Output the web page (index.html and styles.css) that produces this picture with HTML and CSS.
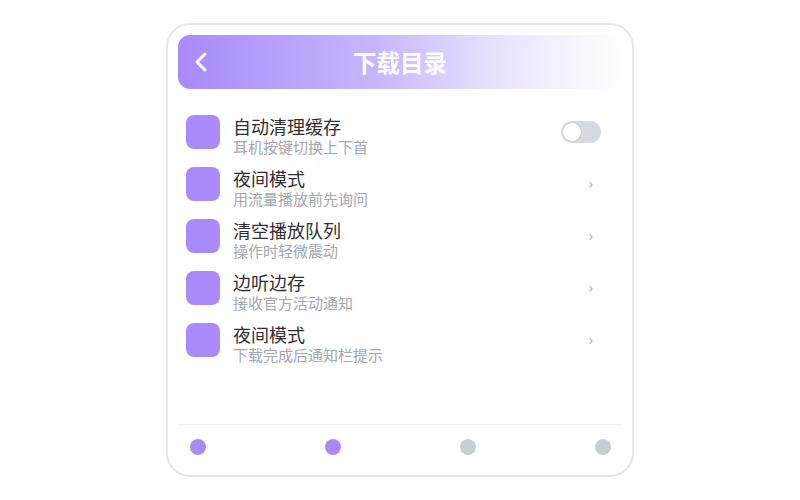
FILE: index.html
```html
<!DOCTYPE html>
<html>
<head>
    <title>下载目录</title>
    <meta charset="utf-8">
    <link rel="stylesheet" href="styles.css">
</head>
<body>
    <div class="phone">
        <!-- top bar -->
        <header class="topbar">
            <svg class="back" width="14" height="22" viewBox="0 0 14 22">
                <polyline points="11,3 3,11 11,19" fill="none" stroke="#ffffff" stroke-width="3" stroke-linecap="round" stroke-linejoin="round"/>
            </svg>
            <h1 class="title">下载目录</h1>
        </header>

        <!-- settings list -->
        <ul class="list">
            <li class="row">
                <span class="icon"></span>
                <div class="text">
                    <p class="name">自动清理缓存</p>
                    <p class="desc">耳机按键切换上下首</p>
                </div>
                <div class="side"><span class="toggle"><span class="knob"></span></span></div>
            </li>
            <li class="row">
                <span class="icon"></span>
                <div class="text">
                    <p class="name">夜间模式</p>
                    <p class="desc">用流量播放前先询问</p>
                </div>
                <div class="side"><span class="arrow">›</span></div>
            </li>
            <li class="row">
                <span class="icon"></span>
                <div class="text">
                    <p class="name">清空播放队列</p>
                    <p class="desc">操作时轻微震动</p>
                </div>
                <div class="side"><span class="arrow">›</span></div>
            </li>
            <li class="row">
                <span class="icon"></span>
                <div class="text">
                    <p class="name">边听边存</p>
                    <p class="desc">接收官方活动通知</p>
                </div>
                <div class="side"><span class="arrow">›</span></div>
            </li>
            <li class="row">
                <span class="icon"></span>
                <div class="text">
                    <p class="name">夜间模式</p>
                    <p class="desc">下载完成后通知栏提示</p>
                </div>
                <div class="side"><span class="arrow">›</span></div>
            </li>
        </ul>

        <!-- page dots -->
        <footer class="dots">
            <span class="dot on"></span>
            <span class="dot on"></span>
            <span class="dot"></span>
            <span class="dot"></span>
        </footer>
    </div>
</body>
</html>
```

FILE: styles.css
```css
body {
    margin: 0;
    background: #ffffff;
    font-family: "Noto Sans CJK SC", "Noto Sans", sans-serif;
}

.phone {
    box-sizing: border-box;
    width: 468px;
    height: 454px;
    margin: 23px auto 0;
    padding: 10px;
    border: 2px solid #e6e6ea;
    border-radius: 24px;
    display: flex;
    flex-direction: column;
}

.topbar {
    height: 54px;
    border-radius: 12px;
    background: linear-gradient(90deg, #a78bfa 0%, #c6b7fc 45%, #e9e3fe 72%, #ffffff 100%);
    display: flex;
    align-items: center;
    padding-left: 16px;
    position: relative;
}

.title {
    margin: 0;
    position: absolute;
    left: 0;
    right: 0;
    text-align: center;
    color: #ffffff;
    font-size: 23.5px;
    font-weight: bold;
    line-height: 54px;
}

.list {
    list-style: none;
    margin: 26px 0 0;
    padding: 0 21px 0 8px;
    display: flex;
    flex-direction: column;
    gap: 12px;
}

.row {
    display: flex;
    align-items: flex-start;
}

.icon {
    width: 34px;
    height: 34px;
    border-radius: 8px;
    background: #a78bfa;
    flex-shrink: 0;
}

.text {
    flex: 1;
    margin-left: 13px;
}

.name {
    margin: 0;
    font-size: 18px;
    line-height: 23px;
    color: #2f2f33;
}

.desc {
    margin: 0;
    font-size: 15px;
    line-height: 17px;
    color: #a3a7ae;
}

.side {
    height: 34px;
    display: flex;
    align-items: center;
}

.toggle {
    width: 40px;
    height: 22px;
    border-radius: 11px;
    background: #d6d9df;
    display: flex;
    align-items: center;
    padding: 0 2px;
    box-sizing: border-box;
}

.knob {
    width: 18px;
    height: 18px;
    border-radius: 50%;
    background: #ffffff;
    box-shadow: 0 0 1px rgba(0, 0, 0, 0.2);
}

.arrow {
    font-size: 15px;
    line-height: 15px;
    color: #a3a7ae;
    margin: 0 8px 4px 0;
}

.dots {
    margin-top: auto;
    border-top: 1px solid #efeff3;
    padding: 14px 11px 10px 12px;
    display: flex;
    justify-content: space-between;
}

.dot {
    width: 16px;
    height: 16px;
    border-radius: 50%;
    background: #c8ccd3;
}

.dot.on {
    background: #a78bfa;
}
```
